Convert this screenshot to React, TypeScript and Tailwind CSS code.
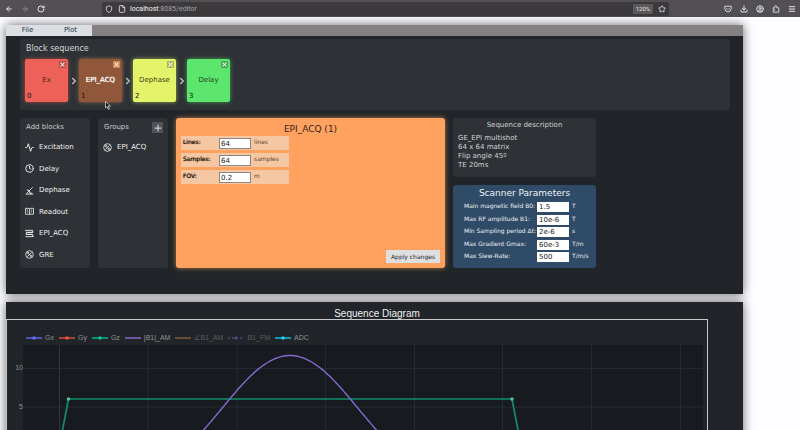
import React from "react";
import { Shield, File as FileIcon, ArrowLeft, ArrowRight, RotateCw, Star, Download, CircleUser, Puzzle, Menu, Plus, X, ChevronRight, Clock, Activity } from "lucide-react";

function PercentIcon() {
  return (
    <svg viewBox="0 0 20 20" className="size-[9px]" fill="none" stroke="currentColor" strokeWidth="1.8">
      <circle cx="10" cy="10" r="8.5" />
      <path d="M5.5 14.5 14.5 5.5" />
      <circle cx="7" cy="7" r="1.8" />
      <circle cx="13" cy="13" r="1.8" />
    </svg>
  );
}

function DephaseIcon() {
  return (
    <svg viewBox="0 0 20 20" className="size-[9px]" fill="none" stroke="currentColor" strokeWidth="2">
      <path d="M2 18h16M3 17 17 3M4 9l6 1 1 6M10 16h6" />
    </svg>
  );
}

function ReadoutIcon() {
  return (
    <svg viewBox="0 0 20 20" className="size-[9px]" fill="none" stroke="currentColor" strokeWidth="1.8">
      <path d="M1 3h8l1 1 1-1h8v13h-8l-1 1-1-1H1zM10 4v13M4 7h3M4 11h3M13 7h3M13 11h3" />
    </svg>
  );
}

function EpiIcon() {
  return (
    <svg viewBox="0 0 20 20" className="size-[9px]" fill="none" stroke="currentColor" strokeWidth="2">
      <path d="M1 3h16v4.500H3V12h14v5H1M5 7.500h13M2 12h13M1 3v2M18 15v3" />
    </svg>
  );
}

function PocketIcon() {
  return (
    <svg viewBox="0 0 20 20" className="size-[8px]" fill="none" stroke="currentColor" strokeWidth="2.200">
      <path d="M2 3h16v6a8 8 0 0 1-16 0zM6 8l4 4 4-4" />
    </svg>
  );
}

function BrowserBar() {
  return (
    <header className="flex h-[17px] shrink-0 items-center bg-[#525052] text-[#e4e3e5]">
      <div className="flex w-[102px] items-center gap-2 pl-[5px]">
        <button aria-label="Back"><ArrowLeft size={8} strokeWidth={3} /></button>
        <button aria-label="Forward" className="text-[#8b898c]"><ArrowRight size={8} strokeWidth={3} /></button>
        <button aria-label="Reload"><RotateCw size={8} strokeWidth={3} /></button>
      </div>
      <div className="mr-[55px] flex h-[14px] flex-1 items-center rounded-xs bg-[#3c3a3d] pr-[3px] pl-[3px]">
        <Shield size={8} strokeWidth={2.5} />
        <FileIcon size={8} strokeWidth={2.5} className="ml-[5px]" />
        <a href="#editor" className="ml-1 font-[Roboto,sans-serif] text-[7px] leading-[10px] text-[#a4a2a6]">
          <span className="text-[#f0eff1]">localhost</span>:8085/editor
        </a>
        <button className="ml-auto h-[10px] w-5 rounded-[1px] bg-[#5b595c] font-[Roboto,sans-serif] text-[6px] leading-[10px]">120%</button>
        <button aria-label="Bookmark" className="ml-[5px]"><Star size={8} strokeWidth={2.5} /></button>
      </div>
      <div className="flex items-center gap-2 pr-1">
        <button aria-label="Save to Pocket"><PocketIcon /></button>
        <button aria-label="Downloads"><Download size={8} strokeWidth={3} /></button>
        <button aria-label="Account"><CircleUser size={8} strokeWidth={3} /></button>
        <button aria-label="Extensions">
          <svg viewBox="0 0 20 20" className="size-[8px]" fill="none" stroke="currentColor" strokeWidth="2.200">
            <path d="M3 7h4V4a2.500 2.500 0 0 1 5 0v3h5v11H3v-4h2a1.800 1.800 0 0 0 0-3.500H3z" />
          </svg>
        </button>
        <button aria-label="Menu"><Menu size={8} strokeWidth={3} /></button>
      </div>
    </header>
  );
}

const blocks = [
  { name: "Ex", style: "bg-[#ed6158] text-[#48211f] shadow-[0_0_4px_#ed615899]", close: "bg-[#b94f49]" },
  { name: "EPI_ACQ", style: "bg-[#90573a] text-white shadow-[0_0_4px_#ffa25f88]", close: "bg-[#cf8753]" },
  { name: "Dephase", style: "bg-[#e3f46b] text-[#3f431d] shadow-[0_0_4px_#e3f46b99]", close: "bg-[#a9b65a]" },
  { name: "Delay", style: "bg-[#5de66d] text-[#1f4a24] shadow-[0_0_4px_#5de66d99]", close: "bg-[#45a851]" },
];

function BlockSequence() {
  return (
    <section className="mt-[3px] mr-[13px] ml-[14px] h-[71px] rounded-[3px] bg-[#2e3236] px-[5px] pt-1">
      <h2 className="pl-px text-[8px] leading-[12px] text-[#d5d7d9]">Block sequence</h2>
      <div className="mt-1 flex items-center">
        {blocks.map((b, i) => (
          <React.Fragment key={b.name}>
            {i > 0 && (
              <span className="flex w-[11px] justify-center text-[#b8babd]">
                <ChevronRight size={10} strokeWidth={4} />
              </span>
            )}
            <div className={`relative flex h-[43px] w-[43px] items-center justify-center rounded-[2px] text-[7px] ${b.style}`}>
              <span className={i === 1 ? "[text-shadow:0_0_1px_white]" : ""}>{b.name}</span>
              <button aria-label={`Remove ${b.name}`} className={`absolute top-[2px] right-[2px] flex size-[7px] items-center justify-center text-white ${b.close}`}>
                <X size={7} strokeWidth={3.5} />
              </button>
              <span className="absolute bottom-px left-[2px] text-[7px] leading-[9px] text-[#111]">{i}</span>
              {i === 1 && (
                <svg viewBox="0 0 12 18" className="absolute top-[42px] left-[26px] h-[9px] w-[6px]">
                  <path d="M1 1v13l3-3 3 6 2-1-3-6h5z" fill="#111" stroke="#e8e8e8" strokeWidth="1.4" />
                </svg>
              )}
            </div>
          </React.Fragment>
        ))}
      </div>
    </section>
  );
}

const palette = [
  { name: "Excitation", icon: <Activity size={9} strokeWidth={2.5} /> },
  { name: "Delay", icon: <Clock size={9} strokeWidth={2.5} /> },
  { name: "Dephase", icon: <DephaseIcon /> },
  { name: "Readout", icon: <ReadoutIcon /> },
  { name: "EPI_ACQ", icon: <EpiIcon /> },
  { name: "GRE", icon: <PercentIcon /> },
];

function PaletteButton({ name, icon }: { name: string; icon: React.ReactNode }) {
  return (
    <button className="flex h-[10px] items-center gap-[5px] text-[7px] leading-[10px] text-[#f0f1f2]">
      {icon}
      {name}
    </button>
  );
}

const fields = [
  { id: "lines", label: "Lines:", value: "64", unit: "lines" },
  { id: "samples", label: "Samples:", value: "64", unit: "samples" },
  { id: "fov", label: "FOV:", value: "0.2", unit: "m" },
];

const scanner = [
  { id: "b0", label: "Main magnetic field B0:", value: "1.5", unit: "T" },
  { id: "b1", label: "Max RF amplitude B1:", value: "10e-6", unit: "T" },
  { id: "dt", label: "Min Sampling period Δt:", value: "2e-6", unit: "s" },
  { id: "gmax", label: "Max Gradient Gmax:", value: "60e-3", unit: "T/m" },
  { id: "slew", label: "Max Slew-Rate:", value: "500", unit: "T/m/s" },
];

function Editor() {
  return (
    <main className="mt-2 mr-[57px] ml-[6px] shrink-0 bg-[#212529] pb-[26px] shadow-[0_0_10px_#0009]">
      <nav className="flex h-[11px] bg-[#858183] text-[7px] leading-[11px] text-[#24364e]">
        <button className="w-[43px] bg-[#dbdfe3]">File</button>
        <button className="w-[43px] bg-[#dbdfe3]">Plot</button>
      </nav>
      <BlockSequence />
      <div className="mt-2 flex h-[150px] gap-2 px-[14px]">
        <section className="w-[70px] rounded-[3px] bg-[#2e3236] px-[5px] pt-1">
          <h2 className="pl-[1px] text-[7px] leading-[11px] text-[#c9cccf]">Add blocks</h2>
          <div className="mt-[9px] flex h-[118px] flex-col justify-between">
            {palette.map((p) => <PaletteButton key={p.name} {...p} />)}
          </div>
        </section>
        <section className="w-[70px] rounded-[3px] bg-[#2e3236] px-[5px] pt-1">
          <div className="flex h-[11px] items-center justify-between pl-[1px] text-[7px] text-[#c9cccf]">
            <h2>Groups</h2>
            <button aria-label="Add group" className="flex size-[11px] items-center justify-center bg-[#505459]"><Plus size={10} strokeWidth={3} /></button>
          </div>
          <div className="mt-[9px]"><PaletteButton name="EPI_ACQ" icon={<PercentIcon />} /></div>
        </section>
        <form className="flex w-[269px] flex-col rounded-[3px] bg-[#ffa25f] p-[5px] shadow-[0_0_5px_#ffa25faa]" onSubmit={(e) => e.preventDefault()}>
          <h2 className="text-center text-[9px] leading-[12px] text-[#33221a]">EPI_ACQ (1)</h2>
          <div className="mt-px flex w-[108px] flex-col gap-[3px]">
            {fields.map((f) => (
              <div key={f.id} className="flex h-[14px] bg-[#f5c8a3] pt-[2px] pl-[2px] text-[6px] leading-[7px] text-[#5d3d29]">
                <label htmlFor={f.id} className="w-9 text-[#1e120b] [text-shadow:0_0_1px_#1e120b]">{f.label}</label>
                <input id={f.id} defaultValue={f.value} className="h-[11px] w-8 border border-[#8b8583] bg-white px-px text-[7px] leading-[9px] text-[#222]" />
                <span className="ml-[3px]">{f.unit}</span>
              </div>
            ))}
          </div>
          <button className="mt-auto h-[13px] w-[54px] self-end bg-[#dedfe1] text-[6px] leading-[13px] text-[#222]">Apply changes</button>
        </form>
        <div className="flex w-[143px] flex-col gap-2">
          <section className="h-[59px] rounded-[3px] bg-[#2e3236] px-[5px] pt-[2px] text-[#d0d3d5]">
            <h2 className="text-center text-[7px] leading-[10px]">Sequence description</h2>
            <p className="mt-1 text-[7px] leading-[9px]">GE_EPI multishot<br />64 x 64 matrix<br />Flip angle 45º<br />TE 20ms</p>
          </section>
          <section className="flex-1 rounded-[3px] bg-[#2f4b67] pt-[2px] text-[#eef2f5]">
            <h2 className="text-center text-[9px] leading-[12px]">Scanner Parameters</h2>
            <div className="mt-[3px] flex h-[60px] flex-col justify-between pl-[11px]">
              {scanner.map((f) => (
                <div key={f.id} className="flex h-[10px] text-[6px] leading-[7px]">
                  <label htmlFor={f.id} className="w-[73px] shrink-0 whitespace-nowrap">{f.label}</label>
                  <input id={f.id} defaultValue={f.value} className="h-[10px] w-8 bg-white px-[2px] text-[7px] leading-[10px] text-[#222]" />
                  <span className="ml-[3px]">{f.unit}</span>
                </div>
              ))}
            </div>
          </section>
        </div>
      </div>
    </main>
  );
}

const legend = [
  { name: "Gx", color: "#636efa", marker: true, dash: "", faded: false },
  { name: "Gy", color: "#ef553b", marker: true, dash: "", faded: false },
  { name: "Gz", color: "#00cc96", marker: true, dash: "", faded: false },
  { name: "|B1|_AM", color: "#9673e6", marker: false, dash: "", faded: false },
  { name: "∠B1_AM", color: "#ffa15a", marker: false, dash: "", faded: true },
  { name: "B1_FM", color: "#7d6bd0", marker: true, dash: "2 2", faded: true },
  { name: "ADC", color: "#19d3f3", marker: true, dash: "", faded: false },
];

// Sinc pulse envelope in plot coordinates.
const pulse = Array.from({ length: 121 }, (_, i) => {
  const x = 147 + i * 2;
  const t = (Math.PI * (x - 267)) / 102;
  const s = t === 0 ? 1 : Math.sin(t) / t;
  return `${x},${(100.5 - 90 * s).toFixed(2)}`;
}).join(" ");

function Diagram() {
  return (
    <section className="mt-2 mr-[57px] ml-[6px] shrink-0 bg-[#212529] pt-[6px] font-['Liberation_Sans',Arial,sans-serif] shadow-[0_0_10px_#0009]">
      <h2 className="pl-[5px] text-center text-[10px] leading-[11px] text-[#eff0f1]">Sequence Diagram</h2>
      <div className="mr-[35px] border border-[#c8c9ca] pt-[14px]">
        <div className="flex items-center gap-[5px] pl-[19px] text-[7px] leading-[8px] text-[#8d9092]">
          {legend.map((l) => (
            <div key={l.name} className={l.faded ? "flex items-center gap-[3px] opacity-50" : "flex items-center gap-[3px]"}>
              <svg viewBox="0 0 16 4" className="h-1 w-4">
                <path d="M0 2h16" stroke={l.color} strokeWidth="1.3" strokeDasharray={l.dash || undefined} />
                {l.marker && <circle cx="8" cy="2" r="1.700" fill={l.color} />}
              </svg>
              {l.name}
            </div>
          ))}
        </div>
        <div className="mt-[3px] mr-1 flex">
          <div className="w-4 shrink-0 pt-[19px] text-right text-[7px] leading-[8px] text-[#8d9092]">
            <div>10</div>
            <div className="mt-[31px]">5</div>
          </div>
          <svg viewBox="0 0 680 180" className="w-full min-w-0 bg-[#171a1e]" fill="none">
            <path d="M125 0v180M214 0v180M302.500 0v180M391.500 0v180M479.500 0v180M568.500 0v180M657.500 0v180M0 23.500h680M0 62h680M0 100.500h680" stroke="#242a31" />
            <path d="M36.500 0v180" stroke="#2c3645" />
            <path d="M36.500 100.500 45.500 54h443.500l9 46.500" stroke="#128d6e" strokeWidth="1.700" />
            <polyline points={pulse} stroke="#8669d2" strokeWidth="1.400" />
            <circle cx="45.500" cy="54" r="1.700" fill="#4fc78f" />
            <circle cx="489" cy="54" r="1.700" fill="#4fc78f" />
          </svg>
        </div>
      </div>
    </section>
  );
}

export default function App() {
  return (
    <div className="flex h-screen flex-col overflow-hidden bg-[#fefdff] font-['DejaVu_Sans',sans-serif]">
      <BrowserBar />
      <Editor />
      <Diagram />
    </div>
  );
}
